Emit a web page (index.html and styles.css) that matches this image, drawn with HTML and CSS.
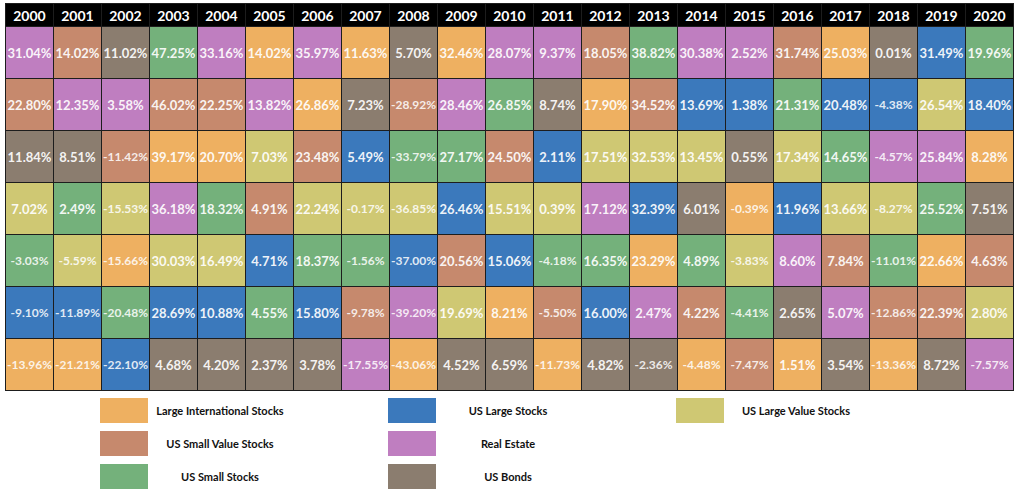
FILE: index.html
```html
<!DOCTYPE html>
<html lang="en">
<head>
<meta charset="utf-8">
<title>Asset Class Returns 2000-2020</title>
<link rel="stylesheet" href="styles.css">
</head>
<body>
<div class="page">
  <div class="grid">
    <div class="h">2000</div><div class="h">2001</div><div class="h">2002</div><div class="h">2003</div><div class="h">2004</div><div class="h">2005</div><div class="h">2006</div><div class="h">2007</div><div class="h">2008</div><div class="h">2009</div><div class="h">2010</div><div class="h">2011</div><div class="h">2012</div><div class="h">2013</div><div class="h">2014</div><div class="h">2015</div><div class="h">2016</div><div class="h">2017</div><div class="h">2018</div><div class="h">2019</div><div class="h">2020</div>

    <div class="c re">31.04%</div><div class="c sv">14.02%</div><div class="c bd">11.02%</div><div class="c ss">47.25%</div><div class="c re">33.16%</div><div class="c li">14.02%</div><div class="c re">35.97%</div><div class="c li">11.63%</div><div class="c bd">5.70%</div><div class="c li">32.46%</div><div class="c re">28.07%</div><div class="c re">9.37%</div><div class="c sv">18.05%</div><div class="c ss">38.82%</div><div class="c re">30.38%</div><div class="c re">2.52%</div><div class="c sv">31.74%</div><div class="c li">25.03%</div><div class="c bd">0.01%</div><div class="c ul">31.49%</div><div class="c ss">19.96%</div>

    <div class="c sv">22.80%</div><div class="c re">12.35%</div><div class="c re">3.58%</div><div class="c sv">46.02%</div><div class="c sv">22.25%</div><div class="c re">13.82%</div><div class="c li">26.86%</div><div class="c bd">7.23%</div><div class="c sv neg">-28.92%</div><div class="c re">28.46%</div><div class="c ss">26.85%</div><div class="c bd">8.74%</div><div class="c li">17.90%</div><div class="c sv">34.52%</div><div class="c ul">13.69%</div><div class="c ul">1.38%</div><div class="c ss">21.31%</div><div class="c ul">20.48%</div><div class="c ul neg">-4.38%</div><div class="c lv">26.54%</div><div class="c ul">18.40%</div>

    <div class="c bd">11.84%</div><div class="c bd">8.51%</div><div class="c sv neg">-11.42%</div><div class="c li">39.17%</div><div class="c li">20.70%</div><div class="c lv">7.03%</div><div class="c sv">23.48%</div><div class="c ul">5.49%</div><div class="c ss neg">-33.79%</div><div class="c ss">27.17%</div><div class="c sv">24.50%</div><div class="c ul">2.11%</div><div class="c lv">17.51%</div><div class="c lv">32.53%</div><div class="c lv">13.45%</div><div class="c bd">0.55%</div><div class="c lv">17.34%</div><div class="c ss">14.65%</div><div class="c re neg">-4.57%</div><div class="c re">25.84%</div><div class="c li">8.28%</div>

    <div class="c lv">7.02%</div><div class="c ss">2.49%</div><div class="c lv neg">-15.53%</div><div class="c re">36.18%</div><div class="c ss">18.32%</div><div class="c sv">4.91%</div><div class="c lv">22.24%</div><div class="c lv neg">-0.17%</div><div class="c lv neg">-36.85%</div><div class="c ul">26.46%</div><div class="c lv">15.51%</div><div class="c lv">0.39%</div><div class="c re">17.12%</div><div class="c ul">32.39%</div><div class="c bd">6.01%</div><div class="c li neg">-0.39%</div><div class="c ul">11.96%</div><div class="c lv">13.66%</div><div class="c lv neg">-8.27%</div><div class="c ss">25.52%</div><div class="c bd">7.51%</div>

    <div class="c ss neg">-3.03%</div><div class="c lv neg">-5.59%</div><div class="c li neg">-15.66%</div><div class="c lv">30.03%</div><div class="c lv">16.49%</div><div class="c ul">4.71%</div><div class="c ss">18.37%</div><div class="c ss neg">-1.56%</div><div class="c ul neg">-37.00%</div><div class="c sv">20.56%</div><div class="c ul">15.06%</div><div class="c ss neg">-4.18%</div><div class="c ss">16.35%</div><div class="c li">23.29%</div><div class="c ss">4.89%</div><div class="c lv neg">-3.83%</div><div class="c re">8.60%</div><div class="c sv">7.84%</div><div class="c ss neg">-11.01%</div><div class="c li">22.66%</div><div class="c sv">4.63%</div>

    <div class="c ul neg">-9.10%</div><div class="c ul neg">-11.89%</div><div class="c ss neg">-20.48%</div><div class="c ul">28.69%</div><div class="c ul">10.88%</div><div class="c ss">4.55%</div><div class="c ul">15.80%</div><div class="c sv neg">-9.78%</div><div class="c re neg">-39.20%</div><div class="c lv">19.69%</div><div class="c li">8.21%</div><div class="c sv neg">-5.50%</div><div class="c ul">16.00%</div><div class="c re">2.47%</div><div class="c sv">4.22%</div><div class="c ss neg">-4.41%</div><div class="c bd">2.65%</div><div class="c re">5.07%</div><div class="c sv neg">-12.86%</div><div class="c sv">22.39%</div><div class="c lv">2.80%</div>

    <div class="c li neg">-13.96%</div><div class="c li neg">-21.21%</div><div class="c ul neg">-22.10%</div><div class="c bd">4.68%</div><div class="c bd">4.20%</div><div class="c bd">2.37%</div><div class="c bd">3.78%</div><div class="c re neg">-17.55%</div><div class="c li neg">-43.06%</div><div class="c bd">4.52%</div><div class="c bd">6.59%</div><div class="c li neg">-11.73%</div><div class="c bd">4.82%</div><div class="c bd neg">-2.36%</div><div class="c li neg">-4.48%</div><div class="c sv neg">-7.47%</div><div class="c li">1.51%</div><div class="c bd">3.54%</div><div class="c li neg">-13.36%</div><div class="c bd">8.72%</div><div class="c re neg">-7.57%</div>
  </div>

  <div class="legend">
    <div class="sw li g1 r1"></div><div class="lab l1 r1">Large International Stocks</div>
    <div class="sw ul g2 r1"></div><div class="lab l2 r1">US Large Stocks</div>
    <div class="sw lv g3 r1"></div><div class="lab l3 r1">US Large Value Stocks</div>
    <div class="sw sv g1 r2"></div><div class="lab l1 r2">US Small Value Stocks</div>
    <div class="sw re g2 r2"></div><div class="lab l2 r2">Real Estate</div>
    <div class="sw ss g1 r3"></div><div class="lab l1 r3">US Small Stocks</div>
    <div class="sw bd g2 r3"></div><div class="lab l2 r3">US Bonds</div>
  </div>
</div>
</body>
</html>
```
FILE: styles.css
```css
html, body {
  margin: 0;
  padding: 0;
  background: #ffffff;
}

.page {
  padding: 3px 0 0 5px;
  font-family: Lato, "Liberation Sans", sans-serif;
}

.grid {
  display: grid;
  grid-template-columns: repeat(21, 47px);
  grid-template-rows: 22px repeat(7, 51px);
  gap: 1px;
  width: max-content;
  background: #1d1d1d;
  border: 1px solid #1d1d1d;
}

.h {
  background: #000000;
  color: #ffffff;
  font-weight: 700;
  font-size: 14px;
  display: flex;
  align-items: center;
  justify-content: center;
}

.c {
  color: rgba(255, 255, 255, 0.93);
  font-weight: 700;
  font-size: 13px;
  display: flex;
  align-items: center;
  justify-content: center;
  white-space: nowrap;
}

.c.neg {
  font-size: 12px;
  color: rgba(255, 255, 255, 0.86);
}

.li { background: #eeb061; }
.sv { background: #c6896d; }
.ss { background: #74b17b; }
.ul { background: #3b79bc; }
.re { background: #bf7ec0; }
.bd { background: #8b7d6f; }
.lv { background: #cfc873; }

.legend {
  display: grid;
  grid-template-columns: repeat(21, 48px);
  grid-template-rows: repeat(3, 25px);
  row-gap: 8px;
  margin-top: 7px;
  margin-left: -1px;
}

.sw { grid-column-end: span 1; }
.g1 { grid-column-start: 3; }
.g2 { grid-column-start: 9; }
.g3 { grid-column-start: 15; }

.lab {
  grid-column-end: span 3;
  display: flex;
  align-items: center;
  justify-content: center;
  font-weight: 700;
  font-size: 11px;
  color: #111111;
  white-space: nowrap;
}
.l1 { grid-column-start: 4; }
.l2 { grid-column-start: 10; }
.l3 { grid-column-start: 16; }

.r1 { grid-row-start: 1; }
.r2 { grid-row-start: 2; }
.r3 { grid-row-start: 3; }
```
